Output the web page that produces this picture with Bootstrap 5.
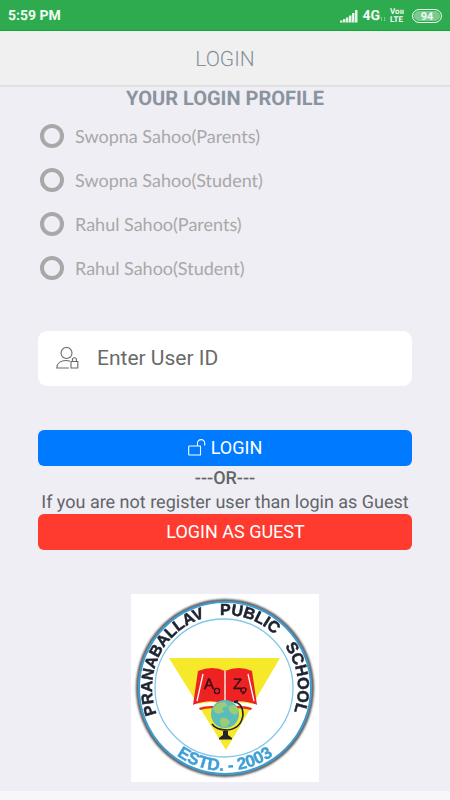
<!DOCTYPE html>
<html lang="en">
<head>
<meta charset="utf-8">
<meta name="viewport" content="width=device-width, initial-scale=1">
<title>Login</title>
<link href="https://cdn.jsdelivr.net/npm/bootstrap@5.3.0/dist/css/bootstrap.min.css" rel="stylesheet">
<style>
  body { background: #efeef4; font-family: Roboto, "Liberation Sans", sans-serif; color: #636468; font-size: 18px; line-height: 24px; text-rendering: geometricPrecision; }
  .status-bar { background: #2fab4f; height: 31px; padding-top: 2px; border-bottom: 1px solid #14a53a; color: #f0fbf2; font-size: 14px; font-weight: 700; }
  .volte { font-size: 8px; line-height: 8px; }
  .battery { width: 30px; height: 14px; border: 1px solid #e9f8ec; box-shadow: inset 0 0 0 1px #2fab4f; background: #7bcb90; font-size: 11px; line-height: 13px; }
  .title-bar { background: #f0f0f0; height: 56px; border-bottom: 2px solid #e0e0e3; padding-top: 6px; }
  .title-bar h1 { font-size: 21px; font-weight: 300; color: #85909b; }
  .profile-heading { font-size: 20px; line-height: 22px; font-weight: 700; color: #8a949f; }
  .content { padding: 0 38px; }
  .profile-list { padding-top: 5px; }
  .profile-option { height: 44px; padding-left: 2px; gap: 11px; }
  .profile-option .form-check-input { width: 24px; height: 24px; border: 4px solid #a8a8a8; background-color: transparent; }
  .profile-option label { font-family: Lato, sans-serif; font-size: 18px; color: #a8a8a8; }
  .user-field { height: 55px; margin-top: 41px; border-radius: 9px; padding-left: 18px; gap: 18px; }
  .user-field input { font-size: 21px; color: #636468; }
  .user-field input::placeholder { color: #6a6a6a; opacity: 1; }
  .action { height: 36px; font-size: 18px; border-radius: 6px; color: #fff; padding: 0 0 2px; }
  .action-login { background: #007aff; margin-top: 44px; gap: 5px; }
  .action-guest { background: #ff3b30; padding-left: 21px; }
  .or-block { padding-top: 1px; margin-bottom: -1px; }
  .or-line { font-weight: 500; }
  .school-logo { width: 188px; height: 188px; margin-top: 44px; }
  .bottom-strip { height: 9px; background: #f7f7f9; }
</style>
</head>
<body class="min-vh-100 d-flex flex-column">
<div class="status-bar d-flex align-items-center justify-content-between px-2">
  <span>5:59 PM</span>
  <div class="d-flex align-items-center">
    <svg width="18" height="13" viewBox="0 0 18 13" fill="#e4f6e8" aria-hidden="true"><path d="M0 10.500h2.500v2H0zM3 9h2.500v3.500H3zM6 7.500h2.500v5H6zM9 5.500h2.500v7H9zM12 3h2.500v9.500H12zM15 0h2.500v12.500H15z"/></svg>
    <span class="ms-1">4G</span>
    <svg class="me-1" width="6" height="14" viewBox="0 0 6 14" stroke="#7bcb90" fill="none" aria-hidden="true"><path d="M1.500 12V8L.5 9M4.500 8v4l1-1"/></svg>
    <span class="volte me-2">Voıı<br>LTE</span>
    <span class="battery rounded-pill text-center">94</span>
  </div>
</div>
<header class="title-bar d-flex align-items-center justify-content-center"><h1 class="m-0">LOGIN</h1></header>
<main class="content flex-grow-1 d-flex flex-column">
  <form class="d-flex flex-column">
    <h2 class="profile-heading text-center mb-0">YOUR LOGIN PROFILE</h2>
    <div class="profile-list">
      <div class="profile-option d-flex align-items-center"><input class="form-check-input m-0" type="radio" name="profile" id="p1"><label for="p1">Swopna Sahoo(Parents)</label></div>
      <div class="profile-option d-flex align-items-center"><input class="form-check-input m-0" type="radio" name="profile" id="p2"><label for="p2">Swopna Sahoo(Student)</label></div>
      <div class="profile-option d-flex align-items-center"><input class="form-check-input m-0" type="radio" name="profile" id="p3"><label for="p3">Rahul Sahoo(Parents)</label></div>
      <div class="profile-option d-flex align-items-center"><input class="form-check-input m-0" type="radio" name="profile" id="p4"><label for="p4">Rahul Sahoo(Student)</label></div>
    </div>
    <div class="user-field bg-white d-flex align-items-center">
      <label for="user" class="d-flex" aria-label="User ID">
        <svg width="23" height="24" viewBox="0 0 23 24" fill="none" stroke="#68686c" stroke-width="1.100" stroke-linecap="round"><circle cx="10.500" cy="6" r="5.500"/><path d="M12.500 21H.8C1 16 5 13.500 10 13.500q2 0 3.500.6M15 14.500h6.800V21H15zM16.400 14.500v-1.800a2 2 0 0 1 4 0v1.800"/></svg>
      </label>
      <input id="user" type="text" class="form-control border-0 bg-transparent p-0" placeholder="Enter User ID">
    </div>
    <button type="submit" class="btn action action-login d-flex align-items-center justify-content-center">
      <svg width="18" height="18" viewBox="0 0 18 18" fill="none" stroke="#fff" stroke-width="1.100" stroke-linecap="round" stroke-linejoin="round" aria-hidden="true"><path d="M1.500 8h11v9h-11a.8.8 0 0 1-.8-.8V8.800a.8.8 0 0 1 .8-.8zM9.500 8V5.200a3.600 3.600 0 0 1 7.200 0V7"/></svg>
      <span>LOGIN</span>
    </button>
    <div class="or-block text-center">
      <div class="or-line">---OR---</div>
      <div class="text-nowrap">If you are not register user than login as Guest</div>
    </div>
    <button type="button" class="btn action action-guest">LOGIN AS GUEST</button>
  </form>
  <svg class="school-logo bg-white align-self-center" viewBox="0 0 188 188" role="img" aria-label="Pranaballav Public School">
    <defs>
      <path id="top-arc" d="M94 167A73 73 0 0 1 94 21A73 73 0 0 1 94 167"/>
      <path id="low-arc" d="M11 94A83 83 0 0 0 177 94"/>
      <filter id="soft"><feGaussianBlur stdDeviation="1.200"/></filter>
      <filter id="slight"><feGaussianBlur stdDeviation=".5"/></filter>
    </defs>
    <circle cx="94" cy="94" r="87.500" fill="none" stroke="#333" stroke-width="2.500" filter="url(#soft)"/>
    <g filter="url(#slight)">
      <circle cx="94" cy="94" r="86" fill="#fff" stroke="#3d9bd2" stroke-width="2"/>
      <circle cx="93" cy="94" r="69" fill="none" stroke="#82c8ea" stroke-width="1.300"/>
      <path d="M38 64h111L95 156z" fill="#f5e92c"/>
      <path d="M67 77q15-6 27 0q14-6 27 0l5 34q-17-7-32-1q-15-6-32 1z" fill="#ee2023"/>
      <path d="M62 111q18-5 32-1q15-4 32 1l-1 4q-16-6-31-1q-15-5-31 1z" fill="#fff"/>
      <path d="M68 114q13-4 26 0q14-4 27 0l-1 2q-14-4-26 1q-13-5-25-1z" fill="#ee2023"/>
      <path d="M94 77v31M72 80l-6 27M117 80l6 27" stroke="#fff" stroke-width="1.300" fill="none"/>
      <g fill="#321015" stroke="#321015" stroke-width=".4" font-family="Liberation Sans, Arial, sans-serif" font-size="15"><text x="73" y="95">A</text><text x="102" y="95">Z</text></g>
      <circle cx="86" cy="97" r="2.600" fill="none" stroke="#321015" stroke-width="1.200"/>
      <path d="M110 96q2-4 5-1q0 4-4 3q-2-1-1-2M115 94q0 5-4 6" fill="none" stroke="#321015" stroke-width="1.200"/>
      <circle cx="94" cy="120" r="14" fill="#5cbcbc"/>
      <path d="M82 114q6-7 12-6l3 4l-6 2l2 4l-6 2q-4-1-5-6zM97 113q6-4 9 0q3 6-2 8l-5-3zM90 124q6-1 9 4q-2 5-7 5q-5-3-2-9z" fill="#c4d94a" opacity=".6"/>
      <path d="M103 108q9 1 9 13q-2 14-16 15q-11 0-15-6M94 136v8" fill="none" stroke="#20232a" stroke-width="1.600"/>
      <path d="M103 108l4-1" stroke="#20232a" stroke-width="2"/>
      <path d="M92 137h5v4l4 3v1.500H88V144l4-3z" fill="#20232a"/>
      <g fill="#1c2430" stroke="#1c2430" stroke-width=".5" font-family="Liberation Sans, Arial, sans-serif" font-weight="700" font-size="16">
        <text><textPath href="#top-arc" startOffset="88">PRANABALLAV</textPath></text>
        <text><textPath href="#top-arc" startOffset="224">PUBLIC</textPath></text>
        <text><textPath href="#top-arc" startOffset="299">SCHOOL</textPath></text>
      </g>
      <text fill="#3f9fd6" stroke="#3f9fd6" stroke-width=".4" font-family="Liberation Sans, Arial, sans-serif" font-weight="700" font-size="17"><textPath href="#low-arc" startOffset="50%" text-anchor="middle">ESTD. - 2003</textPath></text>
    </g>
  </svg>
</main>
<footer class="bottom-strip"></footer>
<script src="https://cdn.jsdelivr.net/npm/bootstrap@5.3.0/dist/js/bootstrap.bundle.min.js"></script>
</body>
</html>
